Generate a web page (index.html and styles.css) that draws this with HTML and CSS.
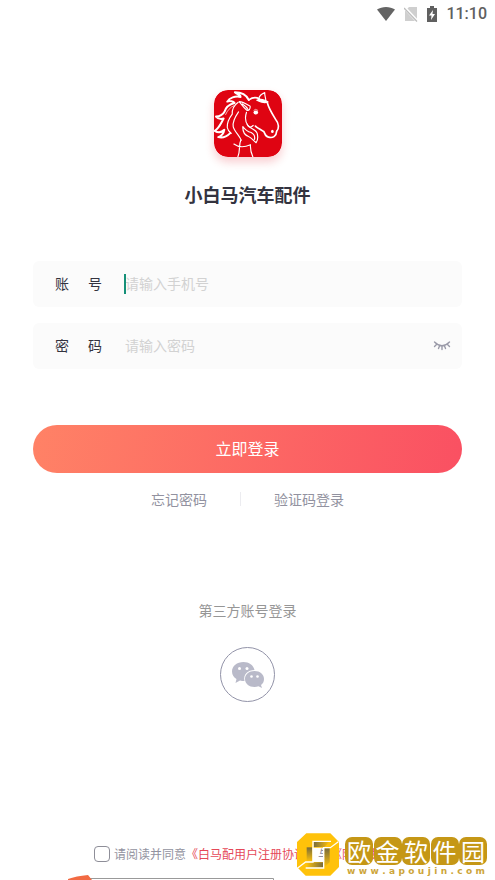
FILE: index.html
```html
<!DOCTYPE html>
<html lang="zh-CN">
<head>
<meta charset="utf-8">
<meta name="viewport" content="width=device-width, initial-scale=1">
<title>小白马汽车配件</title>
<link rel="stylesheet" href="styles.css">
</head>
<body>
<div class="screen">
  <header class="status">
    <svg width="20" height="16" viewBox="0 0 20 16" aria-hidden="true"><path d="M1 3.500C6 0 14 0 19 3.500L10 15Z" fill="#646464"/></svg>
    <svg width="14" height="16" viewBox="0 0 14 16" aria-hidden="true"><path d="M5 1H13V15H1V5Z" fill="#cfcfcf"/><path d="M0 1L14 16" stroke="#fff" stroke-width="3"/><path d="M0 2L13 15.500" stroke="#bdbdbd" stroke-width="1.300"/></svg>
    <svg width="12" height="16" viewBox="0 0 12 16" aria-hidden="true"><path d="M4 0H8V2H11V16H1V2H4Z" fill="#606060"/><path d="M7 4L3 9.500H5.500L5 14L9 8H6.500Z" fill="#fff"/></svg>
    <span class="clock">11:10</span>
  </header>

  <main class="content">
    <svg class="logo" viewBox="27 30 205 202" role="img" aria-label="小白马">
      <rect x="27" y="30" width="205" height="202" rx="42" fill="#df0412"/>
      <g fill="none" stroke="#fff" stroke-linecap="round" stroke-linejoin="round" stroke-width="3.500">
        <path d="M132 60C124 44 110 37 90 37C96 43 107 43 107 51C91 47 73 54 67 65C75 62 86 64 89 69C75 73 62 82 59 95C53 106 43 110 33 110C39 117 48 119 56 116C48 130 42 146 29 153C40 160 51 157 58 150C56 162 48 169 40 172C54 176 68 168 76 160" stroke-width="6"/>
        <path d="M132 60C143 52 154 51 164 57" stroke-width="5"/>
        <path d="M100 67C86 77 81 90 82 103C72 116 66 129 67 143C68 150 73 156 79 161"/>
        <path d="M103 65C116 66 124 72 136 79C137 88 132 94 126 91C116 83 110 74 103 65ZM113 72C121 77 127 82 130 90"/>
        <path d="M162 55C165 45 173 41 180 38C179 47 184 55 183 62"/>
        <path d="M156 61C166 56 181 59 190 66C180 70 169 68 156 61Z" fill="#fff"/>
        <path d="M188 69C192 85 202 101 213 119C224 132 223 147 216 154C215 170 204 176 191 172C181 170 181 161 177 155C168 150 158 145 152 139" stroke-width="5"/>
        <path d="M101 96C90 112 82 126 85 141C89 155 104 168 109 181"/>
        <path d="M125 97C120 112 121 126 129 137C140 149 152 148 157 160C160 171 158 183 154 189C145 182 141 174 131 170C118 165 113 155 114 140C122 152 130 156 139 158C148 163 151 171 149 179"/>
        <path d="M127 133Q134 148 145 137M108 181C101 195 107 213 99 231M87 193C103 205 119 203 137 195C136 207 139 220 144 231"/>
        <path d="M62 104C67 92 76 82 87 77M147 91Q151 85 159 91" stroke-width="2"/>
      </g>
      <ellipse cx="153" cy="98" rx="7" ry="6" fill="#fff"/>
      <ellipse cx="203" cy="155" rx="4" ry="5" fill="#fff"/>
    </svg>
    <h1 class="title">小白马汽车配件</h1>

    <form class="form">
      <div class="field">
        <label class="label" for="account"><span>账</span><span>号</span></label>
        <div class="entry"><input class="input" id="account" type="tel" placeholder="请输入手机号"><span class="caret"></span></div>
      </div>
      <div class="field">
        <label class="label" for="password"><span>密</span><span>码</span></label>
        <div class="entry"><input class="input" id="password" type="password" placeholder="请输入密码"></div>
        <button class="eye" type="button" aria-label="显示密码">
          <svg width="18" height="12" viewBox="0 0 18 12" fill="none" stroke="#9a9aa8" stroke-width="1.400" stroke-linecap="round"><path d="M1.500 3Q9 10.500 16.500 3M3.500 5.500L1.500 7.500M6.500 7L5.500 9.500M9 7.500V10.500M11.500 7L12.500 9.500M14.500 5.500L16.500 7.500"/></svg>
        </button>
      </div>
      <button class="login" type="button">立即登录</button>
    </form>

    <nav class="links">
      <a class="link" href="#forgot">忘记密码</a>
      <span class="divider"></span>
      <a class="link" href="#code">验证码登录</a>
    </nav>

    <section class="third">
      <h2 class="third-title">第三方账号登录</h2>
      <button class="wechat" type="button" aria-label="微信登录">
        <svg width="34" height="28" viewBox="0 0 34 28"><path d="M12.500 1C6 1 1 5 1 10.500C1 14 3 16.500 5.500 18L4.500 22L9 19.500Q11 20 13.500 20C12 13 17 9 23.500 9C22.500 4 18 1 12.500 1Z" fill="#b9bac9"/><path d="M23.500 10C18 10 14 13.500 14 18C14 22.500 18 26 23.500 26Q25.500 26 27.500 25.300L31 27L30 24C32 22.500 33 20.500 33 18C33 13.500 29 10 23.500 10Z" fill="#b9bac9"/><g fill="#fff"><circle cx="8.500" cy="7.500" r="1.500"/><circle cx="16" cy="7.500" r="1.500"/><circle cx="20.500" cy="15.500" r="1.300"/><circle cx="26.500" cy="15.500" r="1.300"/></g></svg>
      </button>
    </section>
  </main>

  <footer class="agreement">
    <input class="check" id="agree" type="checkbox">
    <label for="agree">请阅读并同意<a class="terms" href="#terms">《白马配用户注册协议》</a>与<a class="terms" href="#privacy">《隐私政策》</a></label>
  </footer>

  <svg class="edge" width="206" height="5" viewBox="0 0 206 5" aria-hidden="true"><path d="M20 3.500H205.500V5" fill="none" stroke="#999"/><path d="M0 4Q8 1 20 0L24 5H0Z" fill="#f26a43"/></svg>

  <div class="watermark">
    <svg class="mark" width="42" height="43" viewBox="10 15 126 127" aria-hidden="true">
      <defs>
        <linearGradient id="fade-right"><stop offset="0" stop-color="#776b3d"/><stop offset="1" stop-color="#ffc20a"/></linearGradient>
        <linearGradient id="fade-left"><stop offset="0" stop-color="#ffc20a"/><stop offset="1" stop-color="#776b3d"/></linearGradient>
        <linearGradient id="fade-down" x2="0" y2="1"><stop offset="0" stop-color="#776b3d"/><stop offset="1" stop-color="#ffc20a"/></linearGradient>
      </defs>
      <path fill-rule="evenodd" d="M38 15H110L136 41V116L110 142H36L10 116V41ZM57 58V101H92V58Z" fill="#ffc20a"/>
      <path d="M60 41H108L92 56H60Z" fill="url(#fade-right)"/>
      <path d="M38 102H88V118H38Z" fill="url(#fade-left)"/>
      <path d="M39 57H55V100H39Z" fill="url(#fade-down)"/>
      <path d="M92 60H108V102L92 117Z" fill="url(#fade-down)"/>
      <path d="M112 39H58V101H36L12 119M36 119H90V58H110L134 40" fill="none" stroke="#fff" stroke-width="4"/>
    </svg>
    <div class="brand">
      <div class="tiles"><span>欧</span><span>金</span><span>软</span><span>件</span><span>园</span></div>
      <div class="site"><span>w</span><span>w</span><span>w</span><span>.</span><span>a</span><span>p</span><span>o</span><span>u</span><span>j</span><span>i</span><span>n</span><span>.</span><span>c</span><span>o</span><span>m</span></div>
    </div>
  </div>
</div>
</body>
</html>
```
FILE: styles.css
```css
* { box-sizing: border-box; }

body {
  margin: 0;
  background: #fff;
  color: #33333f;
  font-family: "Noto Sans CJK SC", sans-serif;
  font-size: 14px;
  line-height: 20px;
}

button, input { font: inherit; }
button { padding: 0; border: 0; background: none; cursor: pointer; }
a { color: inherit; text-decoration: none; }
svg { display: block; }

.screen {
  position: relative;
  display: flex;
  flex-direction: column;
  min-height: 100vh;
  overflow: hidden;
}

.status {
  display: flex;
  align-items: center;
  justify-content: flex-end;
  gap: 8px;
  height: 28px;
  padding-right: 8px;
}

.clock {
  color: #606060;
  font-family: Roboto, sans-serif;
  font-size: 16px;
  font-weight: 500;
}

.content {
  flex: 1;
  display: flex;
  flex-direction: column;
  align-items: center;
  padding: 62px 33px 0;
}

.logo {
  width: 68px;
  height: 67px;
  border-radius: 14px;
  box-shadow: 0 5px 10px rgba(223, 4, 18, 0.2);
}

.title {
  margin: 25px 0 0;
  font-size: 18px;
  line-height: 24px;
  font-weight: 700;
}

.form {
  display: flex;
  flex-direction: column;
  gap: 16px;
  width: 100%;
  margin-top: 55px;
}

.field {
  display: flex;
  align-items: center;
  height: 46px;
  padding: 0 11px 2px 22px;
  border-radius: 6px;
  background: #fbfbfb;
}

.label {
  display: flex;
  justify-content: space-between;
  width: 47px;
  margin-right: 23px;
}

.entry { position: relative; flex: 1; }

.input {
  display: block;
  width: 100%;
  padding: 0;
  border: 0;
  outline: 0;
  background: transparent;
  color: #33333f;
}

.input::placeholder { color: #d2d2d2; opacity: 1; }

.caret {
  position: absolute;
  top: 1px;
  left: -1px;
  width: 2px;
  height: 20px;
  background: #159078;
}

.login {
  height: 48px;
  margin-top: 40px;
  padding-bottom: 2px;
  border-radius: 24px;
  background: linear-gradient(100deg, #ff8266, #fa5062);
  color: #fff;
  font-size: 16px;
}

.links {
  display: flex;
  align-items: center;
  gap: 33px;
  margin-top: 16px;
  color: #9292a0;
}

.divider { width: 1px; height: 14px; background: #ececf0; }

.third {
  display: flex;
  flex-direction: column;
  align-items: center;
  gap: 27px;
  margin-top: 91px;
}

.third-title {
  margin: 0;
  color: #969696;
  font-size: 14px;
  font-weight: 400;
}

.wechat {
  display: grid;
  place-items: center;
  width: 55px;
  height: 55px;
  border: 1px solid #9293a8;
  border-radius: 50%;
}

.agreement {
  display: flex;
  align-items: center;
  gap: 4px;
  padding: 0 0 16px 94px;
  color: #9292a0;
  font-size: 12px;
  white-space: nowrap;
}

.check {
  appearance: none;
  width: 16px;
  height: 16px;
  margin: 0;
  border: 1px solid #8e8e98;
  border-radius: 4px;
}

.terms { color: #e54858; }

.edge { position: absolute; bottom: 0; left: 68px; }

.watermark {
  position: absolute;
  right: 8px;
  bottom: 3px;
  display: flex;
  align-items: flex-start;
  gap: 6px;
}

.brand { width: 142px; }

.tiles {
  display: flex;
  justify-content: space-between;
  padding-top: 4px;
}

.tiles span {
  width: 28px;
  height: 28px;
  border-radius: 7px;
  background: #c59716;
  color: #fff;
  font-size: 24px;
  line-height: 27px;
  text-align: center;
}

.site {
  display: flex;
  justify-content: space-between;
  padding: 0 2px;
  color: #cda53a;
  font-family: "DejaVu Sans", sans-serif;
  font-size: 9px;
  font-weight: 700;
  line-height: 12px;
}
```
